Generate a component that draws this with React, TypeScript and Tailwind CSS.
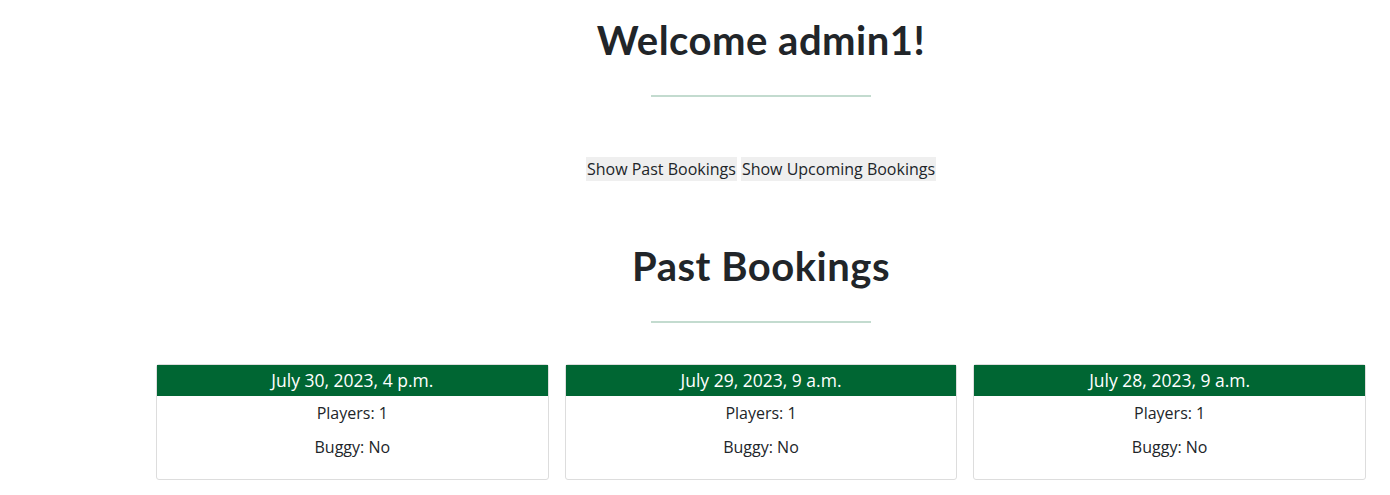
const bookings = [
  { date: "July 30, 2023, 4 p.m.", players: 1, buggy: "No" },
  { date: "July 29, 2023, 9 a.m.", players: 1, buggy: "No" },
  { date: "July 28, 2023, 9 a.m.", players: 1, buggy: "No" },
];

const headingFont = "font-['Lato','Noto_Sans',sans-serif]";

function Heading({ children }: { children: React.ReactNode }) {
  return (
    <div className="flex flex-col items-center">
      <h1 className={`${headingFont} text-[40px] font-bold leading-[48px] tracking-[0.5px] text-[#212529]`}>
        {children}
      </h1>
      <hr className="mt-[31px] w-[220px] border-0 border-t-2 border-[#c3dbcf]" />
    </div>
  );
}

export default function App() {
  return (
    <div className="min-h-[495px] bg-white font-['Open_Sans',sans-serif] text-[#212529]">
      <div className="ml-[156px] w-[1210px] pt-[16px]">
        <Heading>Welcome admin1!</Heading>

        <div className="mt-[60px] flex justify-center gap-[4px] text-[16px] leading-[24px]">
          <button className="bg-[#efefef] px-[1px]">Show Past Bookings</button>
          <button className="bg-[#efefef] px-[1px]">Show Upcoming Bookings</button>
        </div>

        <div className="mt-[61px]">
          <Heading>Past Bookings</Heading>
        </div>

        <div className="mt-[41px] grid grid-cols-3 gap-[16px]">
          {bookings.map((b) => (
            <div key={b.date} className="rounded-[3px] border border-[#dddddd] pb-[20px] text-center">
              <div className="bg-[#006633] text-[17.5px] leading-[31px] text-white">{b.date}</div>
              <p className="mt-[5px] text-[16px] leading-[24px]">Players: {b.players}</p>
              <p className="mt-[10px] text-[16px] leading-[24px]">Buggy: {b.buggy}</p>
            </div>
          ))}
        </div>
      </div>
    </div>
  );
}
